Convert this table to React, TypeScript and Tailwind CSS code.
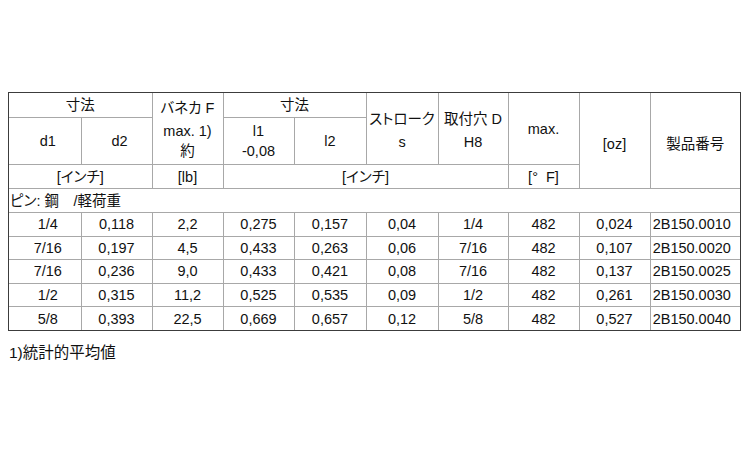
import React from "react";

const font = "font-['Liberation_Sans','Noto_Sans_CJK_JP',sans-serif]";
const cell = "border border-[#a8a8a8] p-0 text-center align-middle whitespace-nowrap";

const rows = [
  ["1/4", "0,118", "2,2", "0,275", "0,157", "0,04", "1/4", "482", "0,024", "2B150.0010"],
  ["7/16", "0,197", "4,5", "0,433", "0,263", "0,06", "7/16", "482", "0,107", "2B150.0020"],
  ["7/16", "0,236", "9,0", "0,433", "0,421", "0,08", "7/16", "482", "0,137", "2B150.0025"],
  ["1/2", "0,315", "11,2", "0,525", "0,535", "0,09", "1/2", "482", "0,261", "2B150.0030"],
  ["5/8", "0,393", "22,5", "0,669", "0,657", "0,12", "5/8", "482", "0,527", "2B150.0040"],
];

const widths = [72, 71, 71, 71, 72, 72, 70, 71, 71, 90];

export default function App() {
  return (
    <div className={`w-[750px] h-[450px] bg-white text-[#111111] ${font} text-[14.5px] [font-feature-settings:'palt'] pt-[92px] pl-[8px]`}>
      <div className="w-[733px] border border-[#3c3c3c]">
        <table className="w-full table-fixed border-collapse border-hidden leading-[20px]">
          <colgroup>
            {widths.map((w, i) => (
              <col key={i} style={{ width: w }} />
            ))}
          </colgroup>
          <tbody>
            <tr className="h-[24px]">
              <td colSpan={2} className={cell}>寸法</td>
              <td rowSpan={2} className={`${cell} align-top`}>
                <div className="flex flex-col">
                  <div className="h-[25px] pt-[5px]">バネカ F</div>
                  <div className="h-[46px] flex flex-col justify-center">
                    <div>max. 1)</div>
                    <div>約</div>
                  </div>
                </div>
              </td>
              <td colSpan={2} className={cell}>寸法</td>
              <td rowSpan={2} className={`${cell} leading-[23px] pt-[4px]`}>
                <div>ストローク</div>
                <div>s</div>
              </td>
              <td rowSpan={2} className={`${cell} leading-[23px] pt-[4px]`}>
                <div>取付穴 D</div>
                <div>H8</div>
              </td>
              <td rowSpan={2} className={cell}>max.</td>
              <td rowSpan={3} className={`${cell} pt-[6px]`}>[oz]</td>
              <td rowSpan={3} className={`${cell} pt-[6px]`}>製品番号</td>
            </tr>
            <tr className="h-[47px]">
              <td className={`${cell} pl-[6px]`}>d1</td>
              <td className={`${cell} pl-[6px]`}>d2</td>
              <td className={cell}>
                <div>l1</div>
                <div>-0,08</div>
              </td>
              <td className={cell}>l2</td>
            </tr>
            <tr className="h-[24px]">
              <td colSpan={2} className={cell}>[インチ]</td>
              <td className={cell}>[lb]</td>
              <td colSpan={4} className={cell}>[インチ]</td>
              <td className={cell}>[°&nbsp;&nbsp;F]</td>
            </tr>
            <tr className="h-[24px]">
              <td colSpan={10} className={`${cell} text-left pl-[1px]`}>ピン: 鋼　/軽荷重</td>
            </tr>
            {rows.map((r, i) => (
              <tr key={i} className="h-[23.6px]">
                {r.map((v, j) => (
                  <td
                    key={j}
                    className={`${cell} ${j === 0 ? "pl-[6px]" : ""} ${j === 9 ? "pr-[7px]" : ""}`}
                  >
                    {v}
                  </td>
                ))}
              </tr>
            ))}
          </tbody>
        </table>
      </div>
      <div className="mt-[12px] pl-[1px] text-[15.5px] leading-[20px]">1)統計的平均値</div>
    </div>
  );
}
